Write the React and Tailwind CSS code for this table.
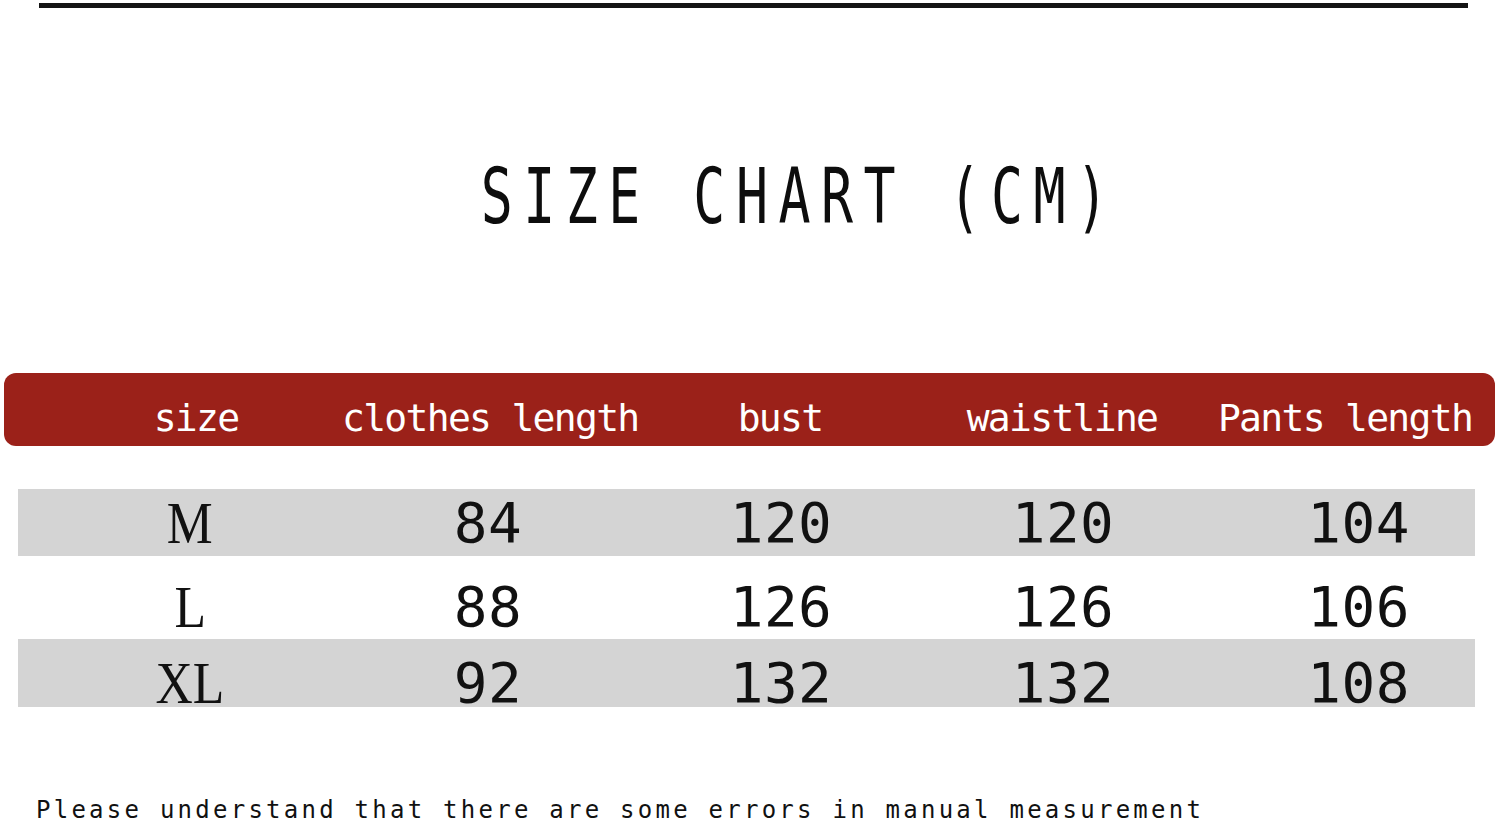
import React from 'react';

const rows = [
  { size: 'M', clothes: '84', bust: '120', waist: '120', pants: '104', bg: 'bg-[#d4d4d4]', h: 'h-[67px]', pt: 'pt-0' },
  { size: 'L', clothes: '88', bust: '126', waist: '126', pants: '106', bg: 'bg-white', h: 'h-[83px]', pt: 'pt-[19px]' },
  { size: 'XL', clothes: '92', bust: '132', waist: '132', pants: '108', bg: 'bg-[#d4d4d4]', h: 'h-[68px]', pt: 'pt-[14px]' },
];

const headers = ['size', 'clothes length', 'bust', 'waistline', 'Pants length'];

const SizeChart = () => {
  return (
    <div className="w-[1500px] h-[826px] bg-white overflow-hidden text-[#111]">
      <div className="mt-[3px] ml-[39px] w-[1429px] h-[5px] bg-[#141414]"></div>

      {/* title */}
      <div className="mt-[151px] flex justify-center pl-[100px]">
        <span className="inline-block origin-center scale-x-[0.7] font-['DejaVu_Sans_Mono',monospace] text-[76px] leading-none tracking-[15px] text-[#0d0d0d] whitespace-pre">
          SIZE CHART (CM)
        </span>
      </div>

      {/* header bar */}
      <div className="mt-[138px] ml-[4px] w-[1491px] h-[73px] rounded-[12px] bg-[#9b2119] pl-[46px] pt-[26px] grid grid-cols-[292px_292px_292px_272px_294px] font-['DejaVu_Sans_Mono',monospace] text-[38px] leading-none tracking-[-1.7px] text-white">
        {headers.map((h) => (
          <div key={h} className="text-center whitespace-pre">{h}</div>
        ))}
      </div>

      {/* rows */}
      <div className="mt-[43px] ml-[18px] w-[1457px] flex flex-col">
        {rows.map((r) => (
          <div
            key={r.size}
            className={`${r.bg} ${r.h} ${r.pt} pl-[26px] pr-[65px] grid grid-cols-[292px_304px_282px_282px_1fr] items-center`}
          >
            <div className="text-center">
              <span className="inline-block scale-x-[0.86] font-['Liberation_Serif',serif] text-[60px] leading-none">
                {r.size}
              </span>
            </div>
            <div className="text-center font-['DejaVu_Sans_Mono',monospace] text-[56px] leading-none tracking-[0.5px]">{r.clothes}</div>
            <div className="text-center font-['DejaVu_Sans_Mono',monospace] text-[56px] leading-none tracking-[0.5px]">{r.bust}</div>
            <div className="text-center font-['DejaVu_Sans_Mono',monospace] text-[56px] leading-none tracking-[0.5px]">{r.waist}</div>
            <div className="text-right font-['DejaVu_Sans_Mono',monospace] text-[56px] leading-none tracking-[0.5px]">{r.pants}</div>
          </div>
        ))}
      </div>

      {/* footer note */}
      <div className="mt-[91px] pl-[36px] font-['DejaVu_Sans_Mono',monospace] text-[24px] leading-none tracking-[3.25px] whitespace-pre">
        Please understand that there are some errors in manual measurement
      </div>
    </div>
  );
};

export default function App() {
  return <SizeChart />;
}
